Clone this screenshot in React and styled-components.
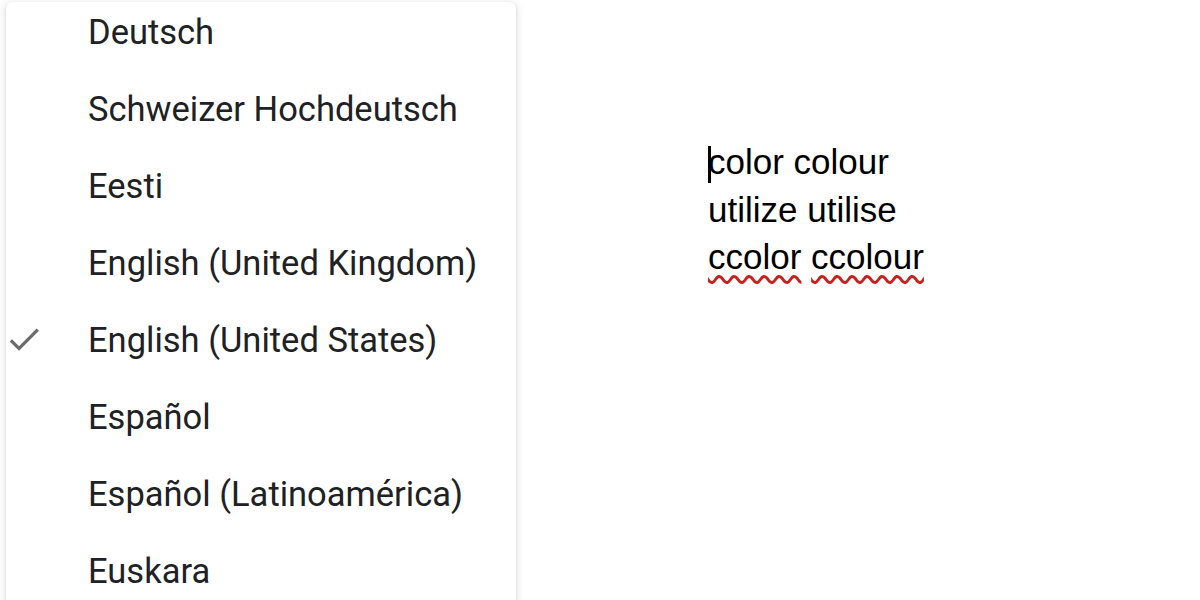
import React from 'react';
import styled, { createGlobalStyle } from 'styled-components';

const GlobalStyle = createGlobalStyle`
    html, body {
        margin: 0;
        padding: 0;
        background: #fff;
    }
    body {
        width: 1200px;
        height: 600px;
        overflow: hidden;
    }
`;

const Page = styled.div`
    display: flex;
    align-items: flex-start;
    width: 1200px;
    height: 600px;
    overflow: hidden;
    box-sizing: border-box;
`;

const Menu = styled.div`
    margin: 2px 0 0 6px;
    width: 510px;
    height: 640px;
    background: #fff;
    border-radius: 6px;
    box-shadow: 0 2px 6px 2px rgba(60, 64, 67, 0.12), 0 1px 2px rgba(60, 64, 67, 0.2);
    overflow: hidden;
    flex-shrink: 0;
`;

const MenuList = styled.div`
    display: flex;
    flex-direction: column;
    margin-top: -8px;
`;

const MenuItem = styled.div`
    position: relative;
    display: flex;
    align-items: center;
    height: 76.9px;
    padding-left: 82px;
    font-family: Roboto, "Noto Sans", sans-serif;
    font-size: 34.5px;
    color: #202124;
    white-space: nowrap;
`;

const Check = styled.svg`
    position: absolute;
    left: -2px;
    top: 50%;
    width: 40px;
    height: 40px;
    transform: translateY(-52%);
    fill: #6b6b6b;
    filter: blur(0.6px);
`;

const Doc = styled.div`
    padding: 138px 0 0 192px;
    font-family: "Liberation Sans", Arial, sans-serif;
    font-size: 35px;
    line-height: 47.5px;
    color: #000;
`;

const Line = styled.div`
    white-space: nowrap;
`;

const Caret = styled.span`
    display: inline-block;
    width: 3px;
    height: 37px;
    margin-right: -3px;
    background: #000;
    vertical-align: -9px;
`;

const Misspelled = styled.span`
    text-decoration: underline wavy #c5221f;
    text-decoration-thickness: 2.5px;
    text-underline-offset: 6px;
`;

const languages = [
    'Deutsch',
    'Schweizer Hochdeutsch',
    'Eesti',
    'English (United Kingdom)',
    'English (United States)',
    'Español',
    'Español (Latinoamérica)',
    'Euskara',
];

const selected = 'English (United States)';

const App = () => {
    return (
        <>
            <GlobalStyle />
            <Page>
                <Menu>
                    <MenuList>
                        {languages.map(name => (
                            <MenuItem key={name}>
                                {name === selected && (
                                    <Check viewBox="0 0 24 24">
                                        <path d="M9 16.17L4.83 12l-1.42 1.41L9 19 21 7l-1.41-1.41z" />
                                    </Check>
                                )}
                                {name}
                            </MenuItem>
                        ))}
                    </MenuList>
                </Menu>
                <Doc>
                    <Line><Caret />color colour</Line>
                    <Line>utilize utilise</Line>
                    <Line>
                        <Misspelled>ccolor</Misspelled> <Misspelled>ccolour</Misspelled>
                    </Line>
                </Doc>
            </Page>
        </>
    );
};

export default App;
